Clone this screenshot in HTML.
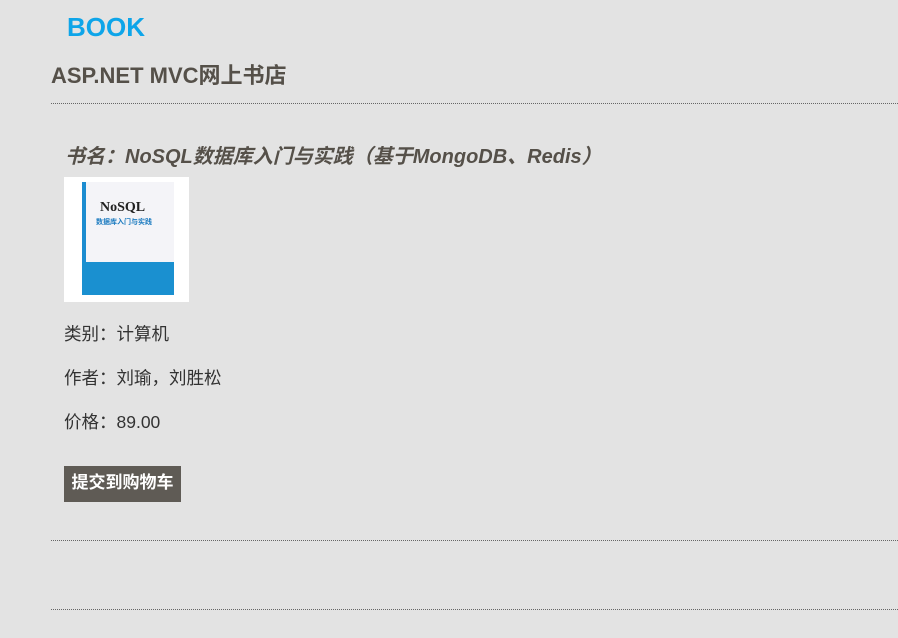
<!DOCTYPE html>
<html><head><meta charset="utf-8"><style>
body{margin:0;background:#e3e3e3;width:898px;height:638px;overflow:hidden;font-family:"Liberation Sans","Noto Sans CJK SC",sans-serif;color:#333;position:relative}
.a{position:absolute}
</style></head><body>
<div class="a" style="left:67px;top:12px;font-size:26px;font-weight:bold;color:#0ea5e9;">BOOK</div>
<div class="a" style="left:51px;top:58px;font-size:22px;font-weight:bold;color:#555049;">ASP.NET MVC网上书店</div>
<div class="a" style="left:51px;top:103px;width:847px;border-top:1px dotted #666"></div>
<div class="a" style="left:65px;top:140px;font-size:20px;font-weight:bold;font-style:italic;color:#555049;">书名：NoSQL数据库入门与实践（基于MongoDB、Redis）</div>
<div class="a" style="left:64px;top:177px;width:125px;height:125px;background:#fff;">
 <div class="a" style="left:18px;top:5px;width:88px;height:90px;background:#f4f4f8;border-left:4px solid #1c8cd0"></div>
 <div class="a" style="left:36px;top:23px;font:bold 14px 'Liberation Serif',serif;color:#222">NoSQL</div>
 <div class="a" style="left:32px;top:40px;font-size:7px;color:#1c7bc0;font-weight:bold">数据库入门与实践</div>
 <div class="a" style="left:18px;top:85px;width:92px;height:33px;background:#1a90d0"></div>
</div>
<div class="a" style="left:64px;top:321px;font-size:17.5px;">类别：计算机</div>
<div class="a" style="left:64px;top:365px;font-size:17.5px;">作者：刘瑜，刘胜松</div>
<div class="a" style="left:64px;top:409px;font-size:17.5px;">价格：89.00</div>
<div class="a" style="left:64px;top:466px;width:117px;height:36px;background:#5f5b55;color:#fff;font-size:17px;font-weight:bold;line-height:34px;text-align:center">提交到购物车</div>
<div class="a" style="left:51px;top:540px;width:847px;border-top:1px dotted #666"></div>
<div class="a" style="left:51px;top:609px;width:847px;border-top:1px dotted #666"></div>
</body></html>
